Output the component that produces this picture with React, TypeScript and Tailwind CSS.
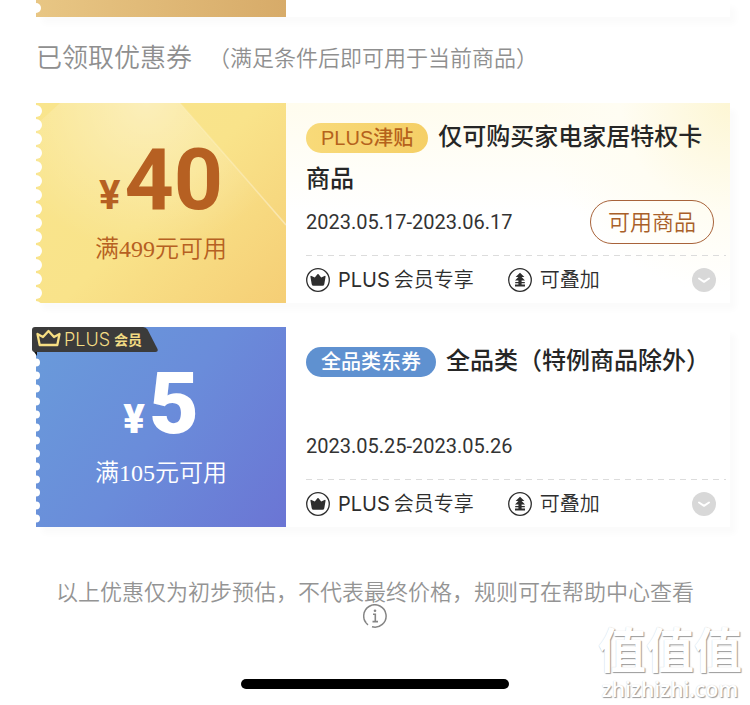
import type { ReactNode } from "react";

const sans = "font-['Inter','Noto_Sans_CJK_SC',sans-serif]";

function CrownBadgeIcon() {
  return (
    <svg viewBox="0 0 24 24" className="size-6 shrink-0" aria-hidden="true">
      <circle cx="12" cy="12" r="11.3" fill="none" stroke="#2e2e2e" strokeWidth="1.3" />
      <path d="M4.4 8.4Q4.600 7.600 5.500 8L8.800 9.400 11.400 6.300Q12 5.700 12.600 6.300L15.200 9.400 18.500 8Q19.400 7.600 19.600 8.400L18.300 16.200Q18 17.800 16.500 17.800H7.500Q6 17.800 5.700 16.200Z" fill="#2e2e2e" />
    </svg>
  );
}

function StackIcon() {
  return (
    <svg viewBox="0 0 24 24" className="size-6 shrink-0" aria-hidden="true">
      <circle cx="12" cy="12" r="11.3" fill="none" stroke="#2e2e2e" strokeWidth="1.3" />
      <path d="M12 4.800 16.400 9H13.600L17 12.600H13.600V14H16.800V15.200H13.600V16.600H17V18.400H7V16.600H10.400V15.200H7.200V14H10.400V12.600H7L10.400 9H7.600Z" fill="#2e2e2e" />
    </svg>
  );
}

function Scallops({ id, step, radius, className = "" }: { id: string; step: number; radius: number; className?: string }) {
  return (
    <svg className={`absolute left-0 bottom-0 w-2 ${className}`} aria-hidden="true">
      <defs>
        <pattern id={id} width="8" height={step} patternUnits="userSpaceOnUse">
          <circle cx="0" cy={step / 2 + 1} r={radius} fill="#fff" />
        </pattern>
      </defs>
      <rect width="8" height="100%" fill={`url(#${id})`} />
    </svg>
  );
}

function PlusRibbon() {
  return (
    <div className="absolute -left-1 top-0 flex h-[25px] w-[126px] items-center">
      <svg viewBox="0 0 126 30" className="absolute left-0 top-0 h-[30px] w-[126px]" aria-hidden="true">
        <path d="M0 22 5 29V24Z" fill="#111" />
        <path d="M3 0H111Q114 0 115.500 2.500L125.500 22Q126.500 25 123.500 25H3Q0 25 0 22V3Q0 0 3 0Z" fill="#3b3b3b" />
        <path d="M5.500 7 11 10 16.500 4 22 10 27.500 7 25.300 18H7.700Z" fill="none" stroke="#f7df83" strokeWidth="2.300" strokeLinejoin="round" />
      </svg>
      <span className="relative flex items-center gap-1 pl-8 text-[#f3dc84]">
        <span className="text-lg font-light leading-6">PLUS</span>
        <span className="text-sm font-bold leading-6">会员</span>
      </span>
    </div>
  );
}

type CouponProps = {
  left: ReactNode;
  tag: ReactNode;
  title: string;
  period: string;
  action?: ReactNode;
  panel: string;
};

function Coupon({ left, tag, title, period, action, panel }: CouponProps) {
  return (
    <article className="flex min-h-[200px] shadow-[6px_7px_6px_rgba(0,0,0,0.02)]">
      {left}
      <div className={`flex min-w-0 flex-1 flex-col pl-5 pt-[13px] ${panel}`}>
        <h2 className="min-h-[85px] pr-2 text-2xl font-medium leading-[42px] text-[#262626]">
          {tag}
          {title}
        </h2>
        <div className="flex h-[42px] items-center justify-between pr-4">
          <time className="font-['Roboto',sans-serif] text-xl text-[#333]">{period}</time>
          {action}
        </div>
        <div className="mr-1 mt-3 h-px bg-[repeating-linear-gradient(90deg,#dcdcdc_0px,#dcdcdc_6px,transparent_6px,transparent_11px)]" />
        <div className="flex flex-1 items-center pr-[14px] text-xl font-[350] text-[#2e2e2e]">
          <CrownBadgeIcon />
          <span className="ml-2 flex gap-1">
            <span className="font-normal">PLUS</span>
            <span>会员专享</span>
          </span>
          <span className="ml-[34px] flex items-center gap-2">
            <StackIcon />
            可叠加
          </span>
          <button type="button" aria-label="展开" className="ml-auto flex size-6 items-center justify-center rounded-full bg-[#d8d8d8]">
            <svg viewBox="0 0 24 24" className="size-6" aria-hidden="true">
              <path d="M7 10.500 12 13.800 17 10.500" fill="none" stroke="#fff" strokeWidth="2" strokeLinecap="round" strokeLinejoin="round" />
            </svg>
          </button>
        </div>
      </div>
    </article>
  );
}

function GoldLeft() {
  return (
    <div className="relative flex w-[250px] shrink-0 flex-col items-center bg-[linear-gradient(135deg,#f9e58d_0%,#f9e38a_50%,#f5ce75_100%)] text-[#b66022]">
      <svg viewBox="0 0 250 200" preserveAspectRatio="none" className="absolute inset-0 h-full w-full" aria-hidden="true">
        <defs>
          <radialGradient id="beam" gradientUnits="userSpaceOnUse" cx="110" cy="0" r="150">
            <stop offset="0" stopColor="#fff" stopOpacity="0.4" />
            <stop offset="1" stopColor="#fff" stopOpacity="0" />
          </radialGradient>
          <linearGradient id="edge" x1="0" y1="0" x2="1" y2="1">
            <stop offset="0" stopColor="#fff" stopOpacity="0.1" />
            <stop offset="1" stopColor="#fff" stopOpacity="0.4" />
          </linearGradient>
        </defs>
        <path d="M24 0H144L250 122V200H0V22Z" fill="url(#beam)" />
        <path d="M144 0 250 122" stroke="url(#edge)" strokeWidth="1.500" />
      </svg>
      <Scallops id="gold-edge" step={14} radius={6} className="h-full" />
      <div className="relative flex items-baseline gap-1 pt-[37px] font-['Roboto',sans-serif] font-bold">
        <span className="text-[40px] leading-[80px]">¥</span>
        <span className="text-[86px] leading-[80px]">40</span>
      </div>
      <p className="relative -mt-1 font-['Liberation_Serif','Noto_Sans_CJK_SC',serif] text-2xl font-[350] leading-[34px]">满499元可用</p>
    </div>
  );
}

function BlueLeft() {
  return (
    <div className="relative flex w-[250px] shrink-0 flex-col items-center bg-[linear-gradient(125deg,#699bda_0%,#6a8cda_50%,#6b75d4_100%)] text-white">
      <Scallops id="blue-edge" step={13} radius={4} className="h-[172px]" />
      <PlusRibbon />
      <div className="relative flex items-baseline gap-1 pt-[37px] font-['Roboto',sans-serif] font-black">
        <span className="text-[40px] leading-[80px]">¥</span>
        <span className="text-[86px] leading-[80px]">5</span>
      </div>
      <p className="relative -mt-1 font-['Liberation_Serif','Noto_Sans_CJK_SC',serif] text-2xl font-[350] leading-[34px]">满105元可用</p>
    </div>
  );
}

export default function App() {
  return (
    <main lang="zh-CN" className={`relative bg-white ${sans}`}>
      <div className="pl-9 pr-5">
        <div className="flex h-[17px] shadow-[6px_7px_6px_rgba(0,0,0,0.02)]">
          <div className="relative w-[250px] shrink-0 bg-linear-to-r from-[#e8c684] to-[#d7ab69]">
            <Scallops id="top-edge" step={14} radius={5} className="h-full" />
          </div>
        </div>

        <header className="mb-[26px] mt-[22px] flex items-center text-[#8f8f8f]">
          <h1 className="text-[26px] font-[350] leading-[38px]">已领取优惠券</h1>
          <p className="ml-4 text-[22px] font-[350] leading-[38px]">（满足条件后即可用于当前商品）</p>
        </header>

        <div className="flex flex-col gap-6">
          <Coupon
            left={<GoldLeft />}
            tag={
              <span className="mr-[10px] inline-block h-[30px] rounded-full bg-linear-to-r from-[#f8da79] to-[#f5cf66] px-[15px] align-middle font-['Liberation_Sans','Noto_Sans_CJK_SC',sans-serif] text-xl font-medium leading-[30px] text-[#b5621c]">
                PLUS津贴
              </span>
            }
            title="仅可购买家电家居特权卡商品"
            period="2023.05.17-2023.06.17"
            panel="bg-[radial-gradient(circle_at_100%_0%,#fdf6d4_0px,#fffdf3_110px,transparent_190px),linear-gradient(180deg,#fffcee_0px,#ffffff_110px)]"
            action={
              <button type="button" className="h-11 rounded-full border border-[#a8633a] px-[17px] text-[22px] font-[350] text-[#a95f28]">
                可用商品
              </button>
            }
          />
          <Coupon
            left={<BlueLeft />}
            tag={
              <span className="mr-[10px] inline-block h-[30px] rounded-full bg-[#5f91d0] px-[15px] align-middle text-xl font-medium leading-[30px] text-white">
                全品类东券
              </span>
            }
            title="全品类（特例商品除外）"
            period="2023.05.25-2023.05.26"
            panel="bg-white"
          />
        </div>
      </div>

      <footer className="mt-[53px] flex flex-col items-center pb-4 text-[#949494]">
        <p className="text-center text-[22px] font-[350] leading-6">以上优惠仅为初步预估，不代表最终价格，规则可在帮助中心查看</p>
        <button type="button" aria-label="说明" className="size-6">
          <svg viewBox="0 0 24 24" className="size-6" fill="none" stroke="#858585" aria-hidden="true">
            <path d="M5 20.800A11.200 11.200 0 1 1 9 22.800M3 18.500A11.200 11.200 0 0 1 1.500 16" strokeWidth="1.500" />
            <path d="M10 10.200H12.300V17.500M9.500 17.600H15" strokeWidth="1.600" />
            <circle cx="12" cy="6.800" r="1.300" fill="#858585" stroke="none" />
          </svg>
        </button>
        <div className="mt-[51px] h-[10px] w-[268px] rounded-full bg-black" />
      </footer>

      <div className="absolute bottom-1 right-2 flex flex-col items-center text-white [text-shadow:1px_1px_1px_#999,0px_0px_1px_#ccc]">
        <span className="text-[48px] font-bold leading-[52px]">值值值</span>
        <span className="font-['Open_Sans',sans-serif] text-[21px] font-semibold leading-6">zhizhizhi.com</span>
      </div>
    </main>
  );
}
